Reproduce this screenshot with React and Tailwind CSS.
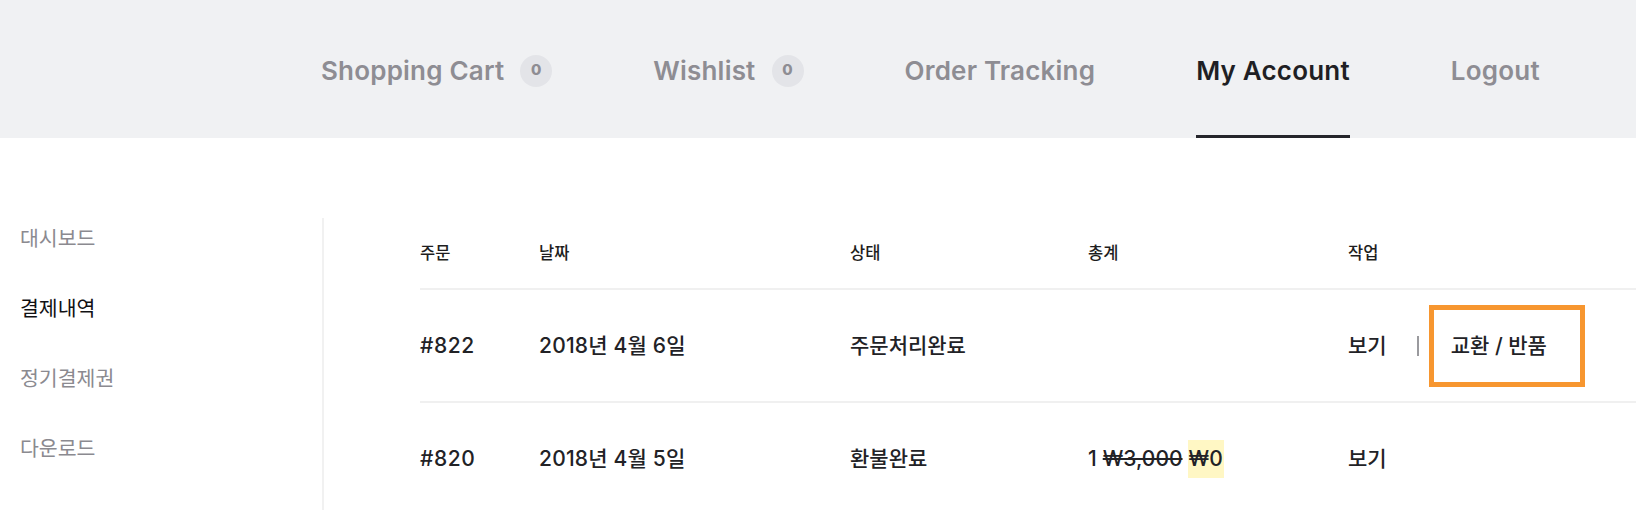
import React from "react";

const navItems = [
    { label: "Shopping Cart", count: 0 },
    { label: "Wishlist", count: 0 },
    { label: "Order Tracking" },
    { label: "My Account", active: true },
    { label: "Logout" },
];

const sideItems = [
    { label: "대시보드" },
    { label: "결제내역", active: true },
    { label: "정기결제권" },
    { label: "다운로드" },
];

const cols = "grid grid-cols-[119px_311px_238px_260px_1fr] items-center";

export default function App() {
    return (
        <div
            className="w-full h-[510px] overflow-hidden bg-white text-[#222226]"
            style={{ fontFamily: "Inter, 'Noto Sans CJK KR', 'Noto Sans', sans-serif" }}
        >
            {/* top nav */}
            <header className="h-[138px] bg-[#f0f1f3] flex items-stretch pl-[321px] gap-[101px]">
                {navItems.map((item) => (
                    <div
                        key={item.label}
                        className={
                            "flex items-center pt-[6px] text-[26px] font-semibold tracking-[0.2px] border-b-[3px] " +
                            (item.active
                                ? "text-[#1f1f24] border-[#25252b]"
                                : "text-[#8e8d93] border-transparent")
                        }
                    >
                        <span>{item.label}</span>
                        {item.count !== undefined && (
                            <span className="ml-[16px] w-[32px] h-[32px] rounded-full bg-[#e3e4e8] flex items-center justify-center text-[15px] font-extrabold text-[#8e8d93]">
                                {item.count}
                            </span>
                        )}
                    </div>
                ))}
            </header>

            <div className="flex h-[372px]">
                {/* sidebar */}
                <aside className="w-[324px] shrink-0 mt-[80px] border-r-2 border-[#f1f1f1] pl-[20px]">
                    <ul className="flex flex-col gap-[28px]">
                        {sideItems.map((s) => (
                            <li
                                key={s.label}
                                className={
                                    "h-[42px] leading-[42px] text-[20.5px] " +
                                    (s.active ? "text-[#111114]" : "text-[#8b8a90]")
                                }
                            >
                                {s.label}
                            </li>
                        ))}
                    </ul>
                </aside>

                {/* orders table */}
                <section className="flex-1 mt-[80px] pl-[96px]">
                    <div className={cols + " h-[72px] border-b-2 border-[#f0f0f0] text-[16.5px] font-medium text-[#1d1d20]"}>
                        <div>주문</div>
                        <div>날짜</div>
                        <div>상태</div>
                        <div>총계</div>
                        <div>작업</div>
                    </div>

                    <div className={cols + " h-[113px] border-b-2 border-[#f0f0f0] text-[21px] font-medium"}>
                        <div className="tracking-[0.6px]">#822</div>
                        <div className="tracking-[0.2px]">2018년 4월 6일</div>
                        <div>주문처리완료</div>
                        <div></div>
                        <div className="flex items-center">
                            <span>보기</span>
                            <span className="ml-[30px] w-[2px] h-[20px] bg-[#9a9a9e]"></span>
                            <span className="ml-[10px] w-[156px] h-[82px] border-[5px] border-[#f7962f] flex items-center pl-[17px]">
                                교환 / 반품
                            </span>
                        </div>
                    </div>

                    <div className={cols + " h-[112px] text-[21px] font-medium"}>
                        <div className="tracking-[0.6px]">#820</div>
                        <div className="tracking-[0.2px]">2018년 4월 5일</div>
                        <div>환불완료</div>
                        <div className="flex items-center">
                            <span>1</span>
                            <span className="ml-[6px] line-through">₩3,000</span>
                            <span className="ml-[5px] bg-[#fff7c4] px-[1px] py-[3px]">₩0</span>
                        </div>
                        <div>보기</div>
                    </div>
                </section>
            </div>
        </div>
    );
}
